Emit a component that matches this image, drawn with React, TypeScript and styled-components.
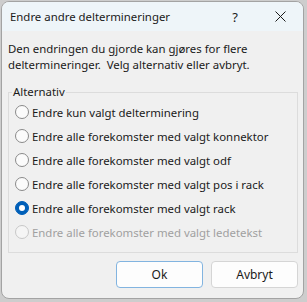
import React, { useState } from 'react'
import styled, { createGlobalStyle } from 'styled-components'

const GlobalStyle = createGlobalStyle`
  html, body {
    margin: 0;
    padding: 0;
    background: #cdcdcd;
  }
  body {
    font-family: "Segoe UI", "Noto Sans", "Open Sans", sans-serif;
    font-size: 11.4px;
    color: #1a1a1a;
  }
`

const options = [
  'Endre kun valgt delterminering',
  'Endre alle forekomster med valgt konnektor',
  'Endre alle forekomster med valgt odf',
  'Endre alle forekomster med valgt pos i rack',
  'Endre alle forekomster med valgt rack',
  'Endre alle forekomster med valgt ledetekst',
]

const Screen = styled.div`
  padding: 1px 3px 3px 1px;
  width: 303px;
  height: 298px;
`

const Window = styled.div`
  box-sizing: border-box;
  width: 303px;
  height: 298px;
  border: 1px solid #a3a3a3;
  border-radius: 8px;
  overflow: hidden;
  display: flex;
  flex-direction: column;
  background: #f0f0f0;
`

const TitleBar = styled.div`
  height: 29px;
  background: #eef5f9;
  display: flex;
  align-items: center;
  padding-left: 8px;
`

const Title = styled.span`
  flex: 1;
  line-height: 16px;
  padding-top: 1px;
`

const TitleButton = styled.div<{ $w: number }>`
  width: ${(p) => p.$w}px;
  height: 29px;
  display: flex;
  align-items: center;
  justify-content: center;
  font-size: 13px;
`

const Body = styled.div`
  flex: 1;
  padding: 10px 5px 7px 6px;
  display: flex;
  flex-direction: column;
`

const Message = styled.p`
  margin: 0;
  line-height: 16px;
  white-space: pre-wrap;
`

const Group = styled.fieldset`
  margin: 11px 0 0 0;
  padding: 0 0 8px 0;
  border: 1px solid #dcdcdc;
  display: flex;
  flex-direction: column;
`

const Legend = styled.legend`
  margin-left: 3px;
  padding: 0 1px;
  line-height: 16px;
`

const Row = styled.label<{ $disabled?: boolean }>`
  height: 24px;
  display: flex;
  align-items: center;
  gap: 3px;
  padding-left: 6px;
  color: ${(p) => (p.$disabled ? '#a0a0a0' : '#1a1a1a')};
`

const Radio = styled.span<{ $checked?: boolean; $disabled?: boolean }>`
  box-sizing: border-box;
  width: 14px;
  height: 14px;
  border-radius: 50%;
  border: 1px solid ${(p) => (p.$disabled ? '#c8c8c8' : p.$checked ? '#005fb8' : '#8a8a8a')};
  background: ${(p) => (p.$checked ? '#005fb8' : p.$disabled ? '#f5f5f5' : '#fbfbfb')};
  display: flex;
  align-items: center;
  justify-content: center;
  &::after {
    content: '';
    display: ${(p) => (p.$checked ? 'block' : 'none')};
    width: 6px;
    height: 6px;
    border-radius: 50%;
    background: #ffffff;
  }
`

const Buttons = styled.div`
  margin-top: 8px;
  display: flex;
  justify-content: flex-end;
  gap: 8px;
`

const Button = styled.button<{ $primary?: boolean }>`
  box-sizing: border-box;
  width: 87px;
  height: 27px;
  font: inherit;
  font-size: 12px;
  color: #1a1a1a;
  background: #fdfdfd;
  border: 1px solid ${(p) => (p.$primary ? '#82b4e0' : '#d5d5d5')};
  border-radius: 4px;
  padding: 0;
`

const CloseIcon = () => (
  <svg width="11" height="11" viewBox="0 0 11 11">
    <path d="M0.5 0.5 L10.5 10.5 M10.5 0.5 L0.5 10.5" stroke="#1a1a1a" strokeWidth="1" />
  </svg>
)

export default function App() {
  const [selected, setSelected] = useState(4)

  return (
    <>
      <GlobalStyle />
      <Screen>
        <Window>
          <TitleBar>
            <Title>Endre andre deltermineringer</Title>
            <TitleButton $w={44}>?</TitleButton>
            <TitleButton $w={46}>
              <CloseIcon />
            </TitleButton>
          </TitleBar>
          <Body>
            <Message>
              {'Den endringen du gjorde kan gjøres for flere\ndeltermineringer.  Velg alternativ eller avbryt.'}
            </Message>
            <Group>
              <Legend>Alternativ</Legend>
              {options.map((text, i) => {
                const disabled = i === 5
                return (
                  <Row key={i} $disabled={disabled} onClick={() => !disabled && setSelected(i)}>
                    <Radio $checked={selected === i} $disabled={disabled} />
                    {text}
                  </Row>
                )
              })}
            </Group>
            <Buttons>
              <Button $primary>Ok</Button>
              <Button>Avbryt</Button>
            </Buttons>
          </Body>
        </Window>
      </Screen>
    </>
  )
}
